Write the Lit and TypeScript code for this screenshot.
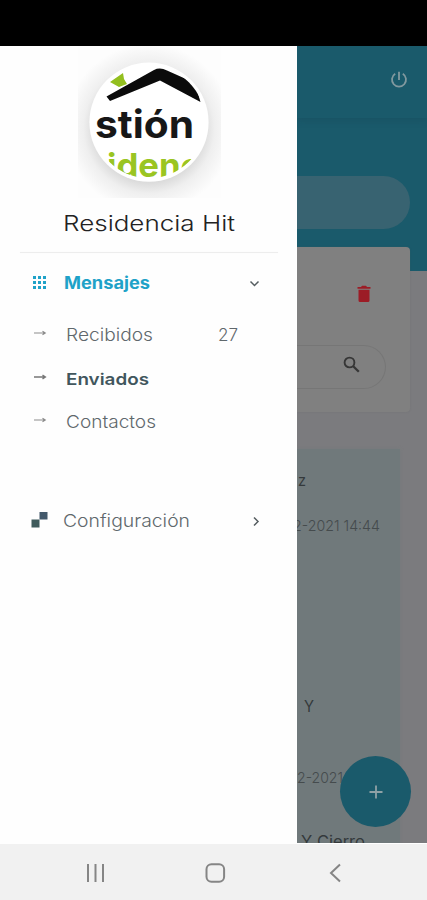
import { LitElement, html, svg, css } from "lit";
import { customElement } from "lit/decorators.js";

// A single line of text fitted to a known width; baseline sits 15px below the top.
const label = (text: string, width: number, kind: string) => html`
  <svg class="label ${kind}" width=${width} height="20">
    <text x="0" y="15" textLength=${width} lengthAdjust="spacingAndGlyphs">${text}</text>
  </svg>`;

const arrow = (kind = "") => html`
  <svg class="arrow ${kind}" width="14" height="8" viewBox="0 0 14 8">
    <path d="M1 4H12M9.5 2.2L12.3 4L9.5 5.8" />
  </svg>`;

@customElement("app-root")
export class AppRoot extends LitElement {
  static styles = css`
    :host { display: block; width: 427px; height: 900px; overflow: hidden; background: #fff;
      font-family: Inter, "Liberation Sans", sans-serif; }
    svg { display: block; flex: none; }
    .screen { height: 900px; display: flex; flex-direction: column; }
    .status { height: 46px; background: #000; flex: none; }
    .content { height: 798px; display: flex; flex: none; }
    .label { overflow: visible; }
    .label text { fill: currentColor; }

    .drawer { width: 297px; flex: none; background: #fefefe; color: #6f7a7e; box-sizing: border-box; border-right: 1px solid #fff; }
    .logo { margin-left: 78px; }
    .name { color: #222; font-size: 22px; font-weight: 350; margin: 18px 0 0 63px; }
    .rule { height: 1px; background: #ededed; margin: 16px 18px 0 20px; box-shadow: 0 0 1px #f2f2f2; }
    .row { display: flex; align-items: center; box-sizing: border-box; padding-left: 33px; }
    .row .label { margin-left: 18px; }
    .group { height: 61px; }
    .group .label { margin-top: 1px; }
    .dots { margin-top: -2px; }
    .main { color: #1fa2c8; font-size: 17px; font-weight: 700; }
    .item { height: 43.5px; }
    .item .label { margin-left: 19px; }
    .thin { font-size: 17.5px; font-weight: 300; color: #5f686c; }
    .strong { font-size: 16.5px; font-weight: 600; color: #41565d; }
    .item .strong { margin-top: 1px; }
    .item .count { margin-left: 65px; }
    .arrow { fill: none; stroke: #8b8b8b; stroke-width: 1.1; margin-top: -5px; }
    .arrow.on { stroke: #777; stroke-width: 1.4; margin-top: -4px; }
    .config { height: 44px; margin-top: 55px; padding-left: 31px; }
    .config .label { margin-left: 15px; }
    .squares { margin-top: -4px; }
    .chev { fill: none; stroke: #555d60; stroke-width: 1.5; }
    .down { margin-left: 99px; }
    .right { margin-left: 62px; margin-top: -1px; }

    .page { width: 130px; height: 797px; background: #7b7b7e; overflow: hidden; position: relative; }
    .hero { height: 201px; background: #1a5a6b; }
    .bar { height: 72px; display: flex; box-sizing: border-box; padding: 25px 0 0 93px; box-shadow: 0 2px 7px rgba(20, 60, 80, .28); }
    .pill { width: 113px; height: 53px; margin-top: 58px; background: #386371; border-radius: 0 27px 27px 0; }
    .hero-tail { height: 24px; background: #1a5a6b; margin-bottom: -24px; }
    .card { position: relative; width: 113px; height: 165px; background: #808080; border-radius: 0 4px 4px 0;
      box-shadow: 0 0 2px rgba(90, 90, 95, .25); display: flex; flex-direction: column; }
    .trash { margin: 38px 0 0 60px; }
    .search { width: 89px; height: 44px; margin-top: 42px; box-sizing: border-box; border: 1px solid #767676; border-left: 0;
      border-radius: 0 22px 22px 0; padding: 10px 0 0 46px; }
    .list { width: 103px; height: 420px; margin-top: 37px; padding-top: 22px; box-sizing: border-box; background: #70797b;
      box-shadow: 0 0 3px #747a7c; }
    .ink { color: #34393b; font-size: 16px; }
    .date { color: #454b4d; font-size: 15px; font-weight: 300; }
    .l1 { margin-left: 1px; }
    .l2 { margin: 25px 0 0 -4px; }
    .l3 { margin: 161px 0 0 7px; }
    .l4 { margin: 51px 0 0 0; }
    .l5 { margin: 44px 0 0 4px; }
    .fab { position: absolute; left: 43px; top: 710px; width: 71px; height: 71px; border-radius: 50%; background: #1a5a6b;
      display: flex; align-items: center; justify-content: center; }

    .nav { flex: 1; background: #f1f1f1; display: flex; align-items: center; padding: 2px 0 0 86px; }
    .nav svg { fill: none; stroke: #858585; stroke-width: 2; }
    .home { margin-left: 99px; }
    .back { margin-left: 103px; }
  `;

  private logo() {
    return html`
      <svg class="logo" width="143" height="152" viewBox="78 46 143 152">
        <defs>
          <radialGradient id="halo" gradientUnits="userSpaceOnUse" cx="149" cy="128" r="84">
            <stop offset=".64" stop-color="#dadada" />
            <stop offset=".78" stop-color="#efefef" />
            <stop offset="1" stop-color="#fdfdfd" />
          </radialGradient>
          <clipPath id="disc"><circle cx="149" cy="122" r="56.3" /></clipPath>
        </defs>
        <rect x="78" y="46" width="143" height="152" fill="url(#halo)" />
        <circle cx="149" cy="122.2" r="59.6" fill="#fff" />
        <g clip-path="url(#disc)" font-weight="700">
          <path d="M110 82L123 73L124 79L127 84L119 87Z" fill="#93bf1f" />
          <path d="M106.5 96.5L154 70Q160 67 167 70.5L195 83L200.5 102L160 80.5L110 101Z" fill="#0b0b0b" />
          <text x="95" y="138.3" font-size="38" textLength="99" lengthAdjust="spacingAndGlyphs" fill="#171717">stión</text>
          <text x="107" y="176.5" font-size="33" textLength="94" lengthAdjust="spacingAndGlyphs" fill="#9ac522">idenc</text>
        </g>
      </svg>`;
  }

  render() {
    return html`
      <div class="screen">
        <div class="status"></div>
        <div class="content">
          <nav class="drawer">
            ${this.logo()}
            <div class="name">${label("Residencia Hit", 172, "")}</div>
            <div class="rule"></div>
            <div class="row group">
              <svg class="dots" width="13" height="13" fill="#1fa2c8">
                ${[0, 5, 10].map((y) => [0, 5, 10].map((x) => svg`<rect x=${x} y=${y} width="3" height="3" />`))}
              </svg>
              ${label("Mensajes", 86, "main")}
              <svg class="chev down" width="11" height="8"><path d="M1.5 1.5L5.5 5.5L9.5 1.5" /></svg>
            </div>
            <div class="row item">${arrow()}${label("Recibidos", 87, "thin")}${label("27", 20, "thin count")}</div>
            <div class="row item">${arrow("on")}${label("Enviados", 83, "strong")}</div>
            <div class="row item">${arrow()}${label("Contactos", 90, "thin")}</div>
            <div class="row config">
              <svg class="squares" width="17" height="16"><rect x="8.5" width="8" height="7.5" fill="#43596b" /><rect x=".5" y="7.5" width="8" height="8" fill="#3f5b5c" /></svg>
              ${label("Configuración", 127, "thin")}
              <svg class="chev right" width="8" height="11"><path d="M2 1.5L6 5.5L2 9.5" /></svg>
            </div>
          </nav>
          <main class="page">
            <div class="hero">
              <div class="bar">
                <svg width="18" height="18" fill="none" stroke="#82999f" stroke-width="1.8">
                  <path d="M9 .8V9M5.2 2.8A7 7 0 1 0 12.8 2.8" />
                </svg>
              </div>
              <div class="pill"></div>
            </div>
            <div class="hero-tail"></div>
            <section class="card">
              <svg class="trash" width="14" height="18" fill="#9c1c26"><path d="M.5 2H4L5 .8H9L10 2H13.5V3.8H.5ZM1.5 4.8H12.5V15.5Q12.5 17 11 17H3Q1.5 17 1.5 15.5Z" /></svg>
              <div class="search">
                <svg width="18" height="18" fill="none" stroke="#363636"><circle cx="6.5" cy="6.5" r="4.9" stroke-width="1.9" /><path d="M10 10L15.8 15.8" stroke-width="2.3" /></svg>
              </div>
            </section>
            <section class="list">
              ${label("z", 8, "ink l1")}
              ${label("2-2021 14:44", 87, "date l2")}
              ${label("Y", 10, "ink l3")}
              ${label("2-2021", 46, "date l4")}
              ${label("Y Cierro", 64, "ink l5")}
            </section>
            <div class="fab">
              <svg width="14" height="14" stroke="#8fa1a6" stroke-width="1.8"><path d="M7 .5V13.5M.5 7H13.5" /></svg>
            </div>
          </main>
        </div>
        <footer class="nav">
          <svg width="20" height="20"><path d="M2 1V19M9.5 1V19M17 1V19" /></svg>
          <svg class="home" width="21" height="20"><rect x="1.5" y="1.2" width="17.6" height="17.6" rx="5" /></svg>
          <svg class="back" width="12" height="20"><path d="M11 1.5L2 10L11 18.5" /></svg>
        </footer>
      </div>`;
  }
}
